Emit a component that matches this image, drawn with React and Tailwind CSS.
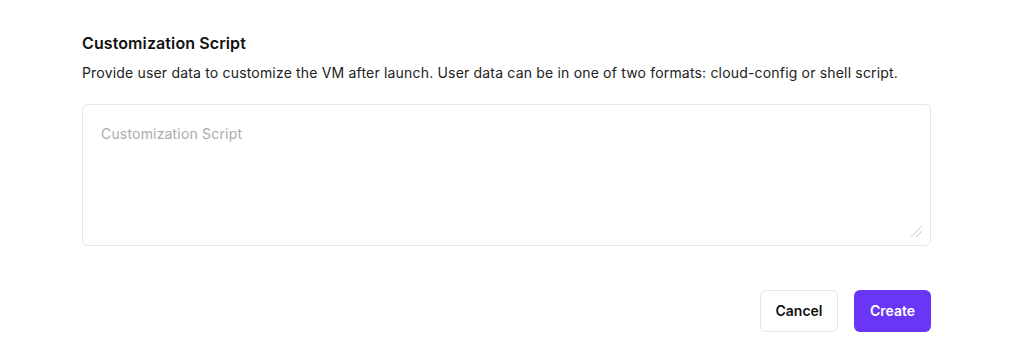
import React from 'react';

const App = () => {
  return (
    <div className="min-h-screen bg-white pl-[82px] pr-[81px] pt-[31px]" style={{ fontFamily: 'Inter, "Noto Sans", sans-serif' }}>
      {/* Header */}
      <h2 className="text-base font-semibold text-[#111111] leading-6 tracking-[0.1px]">Customization Script</h2>
      <p className="mt-[8px] text-sm text-[#222222] leading-5 tracking-[0.18px]">
        Provide user data to customize the VM after launch. User data can be in one of two formats: cloud-config or shell script.
      </p>

      {/* Script input */}
      <div className="relative mt-[21px]">
        <textarea
          className="block w-full h-[142px] resize-none rounded-md border border-[#e6e3f3] px-[18px] py-[19px] text-sm leading-5 tracking-[0.18px] text-[#222222] placeholder:text-[#ababab] outline-none"
          placeholder="Customization Script"
        />
        <svg className="absolute right-[8px] bottom-[8px] pointer-events-none" width="13" height="13" viewBox="0 0 13 13">
          <line x1="1" y1="12" x2="12" y2="1" stroke="#c9c6dc" strokeWidth="1" />
          <line x1="6" y1="12" x2="12" y2="6" stroke="#c9c6dc" strokeWidth="1" />
        </svg>
      </div>

      {/* Actions */}
      <div className="mt-[44px] flex justify-end gap-4">
        <button className="h-[42px] w-[78px] rounded-md border border-[#e5e5e5] bg-white text-sm font-semibold text-[#111111]">
          Cancel
        </button>
        <button className="h-[42px] w-[77px] rounded-md bg-[#6a36f5] text-sm font-semibold text-white">
          Create
        </button>
      </div>
    </div>
  );
};

export default App;
